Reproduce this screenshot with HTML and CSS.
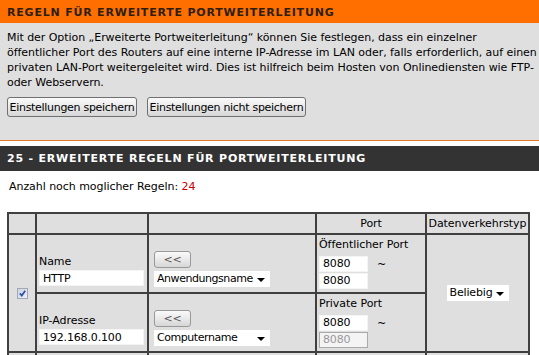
FILE: index.html
```html
<!DOCTYPE html>
<html lang="de">
<head>
    <meta charset="UTF-8">
    <title>Erweiterte Portweiterleitung</title>
    <link rel="stylesheet" href="styles.css">
</head>
<body>
    <div class="section intro">
        <h2 class="bar bar-orange">REGELN FÜR ERWEITERTE PORTWEITERLEITUNG</h2>
        <div class="intro-body">
            <p>Mit der Option „Erweiterte Portweiterleitung“ können Sie festlegen, dass ein einzelner<br>
            öffentlicher Port des Routers auf eine interne IP-Adresse im LAN oder, falls erforderlich, auf einen<br>
            privaten LAN-Port weitergeleitet wird. Dies ist hilfreich beim Hosten von Onlinediensten wie FTP-<br>
            oder Webservern.</p>
            <div class="actions">
                <button class="btn btn-save">Einstellungen speichern</button>
                <button class="btn btn-cancel">Einstellungen nicht speichern</button>
            </div>
        </div>
    </div>

    <div class="section rules">
        <h2 class="bar bar-dark">25 - ERWEITERTE REGELN FÜR PORTWEITERLEITUNG</h2>
        <p class="count">Anzahl noch moglicher Regeln: <span class="count-num">24</span></p>
        <table class="rules-table">
            <colgroup>
                <col class="c-check">
                <col class="c-name">
                <col class="c-pick">
                <col class="c-port">
                <col class="c-type">
            </colgroup>
            <tr class="head">
                <td></td>
                <td></td>
                <td></td>
                <td class="center">Port</td>
                <td class="center">Datenverkehrstyp</td>
            </tr>
            <tr class="rule">
                <td rowspan="2" class="center cell-check">
                    <span class="check">
                        <svg width="7" height="7" viewBox="0 0 7 7"><path d="M0.8 3.4 L2.8 5.6 L6.2 0.8" fill="none" stroke="#2a4fb0" stroke-width="1.7"/></svg>
                    </span>
                </td>
                <td class="cell-low">
                    <div class="label">Name</div>
                    <input type="text" class="field field-wide" value="HTTP">
                </td>
                <td class="cell-low">
                    <button class="btn btn-small">&lt;&lt;</button>
                    <span class="select select-wide">Anwendungsname</span>
                </td>
                <td class="port">
                    <div class="label">Öffentlicher Port</div>
                    <div class="port-line"><input type="text" class="field field-port" value="8080"><span class="tilde">~</span></div>
                    <input type="text" class="field field-port" value="8080">
                </td>
                <td rowspan="2" class="center">
                    <span class="select select-type">Beliebig</span>
                </td>
            </tr>
            <tr class="rule">
                <td class="cell-low">
                    <div class="label">IP-Adresse</div>
                    <input type="text" class="field field-wide" value="192.168.0.100">
                </td>
                <td class="cell-low">
                    <button class="btn btn-small">&lt;&lt;</button>
                    <span class="select select-wide">Computername</span>
                </td>
                <td class="port">
                    <div class="label">Private Port</div>
                    <div class="port-line"><input type="text" class="field field-port" value="8080"><span class="tilde">~</span></div>
                    <input type="text" class="field field-port" value="8080" disabled>
                </td>
            </tr>
            <tr class="rule">
                <td></td>
                <td></td>
                <td></td>
                <td></td>
                <td></td>
            </tr>
        </table>
    </div>
</body>
</html>
```

FILE: styles.css
```css
body {
    margin: 0;
    background: #fff;
    font-family: "DejaVu Sans", Tahoma, sans-serif;
    font-size: 11px;
    letter-spacing: -0.05px;
    color: #000;
    width: 539px;
    height: 355px;
    overflow: hidden;
}
.bar {
    margin: 0;
    font-family: "DejaVu Sans", Verdana, sans-serif;
    font-weight: bold;
    font-size: 11px;
    letter-spacing: 0.8px;
    padding: 0 7px;
}
.bar-orange {
    background: #ff6f00;
    color: #2e1e10;
    height: 23px;
    line-height: 25px;
}
.bar-dark {
    background: #333;
    color: #fff;
    height: 25px;
    line-height: 26px;
}
.intro {
    background: #dfdfdf;
    border-bottom: 1px solid #e07d2d;
}
.intro-body {
    padding: 7px 0 23px 7px;
}
.intro-body p {
    margin: 0;
    line-height: 15px;
    white-space: nowrap;
}
.actions {
    margin-top: 7px;
    display: flex;
    gap: 10px;
}
.btn {
    font-family: "DejaVu Sans", Tahoma, sans-serif;
    font-size: 11px;
    letter-spacing: -0.3px;
    white-space: nowrap;
    height: 20px;
    padding: 0;
    border: 1px solid #707070;
    border-radius: 3px;
    background: linear-gradient(#fafafa, #e6e6e6 60%, #d6d6d6);
    color: #000;
}
.btn-save {
    width: 130px;
}
.btn-cancel {
    width: 159px;
}
.rules {
    margin-top: 5px;
}
.count {
    margin: 0;
    padding: 8px 9px 0;
    height: 41px;
    box-sizing: border-box;
    line-height: 15px;
}
.count-num {
    color: #c00;
}
.rules-table {
    margin-left: 7px;
    width: 521px;
    table-layout: fixed;
    border-collapse: collapse;
    background: #dfdfdf;
}
.c-check { width: 28px; }
.c-name { width: 112px; }
.c-pick { width: 168px; }
.c-port { width: 110px; }
.c-type { width: 103px; }
.rules-table td {
    border: 2px solid #404040;
    padding: 0 2px;
    vertical-align: middle;
    box-sizing: border-box;
}
.rules-table .head td {
    height: 21px;
    line-height: 15px;
    padding: 0;
}
.rules-table .rule td {
    height: 59px;
}
.center {
    text-align: center;
}
.rules-table .cell-low {
    vertical-align: bottom;
    padding-bottom: 5px;
}
.label {
    line-height: 14px;
}
.port .label {
    margin-bottom: 4px;
}
.port-line {
    display: flex;
    align-items: center;
}
.tilde {
    margin-left: 9px;
}
.field {
    font-family: "DejaVu Sans", Tahoma, sans-serif;
    font-size: 11px;
    letter-spacing: -0.15px;
    height: 16px;
    box-sizing: border-box;
    border: 1px solid #f4f4f4;
    background: #fff;
    padding: 0 3px;
    display: block;
    margin-bottom: 1px;
}
.field-wide {
    width: 105px;
    margin-top: 1px;
}
.field-port {
    width: 49px;
}
.field:disabled {
    background: #f4f4f4;
    border-color: #aaa;
    color: #999;
}
.rules-table .cell-check {
    padding: 0;
}
.check {
    display: inline-block;
    width: 11px;
    height: 11px;
    box-sizing: border-box;
    border: 1px solid #a0a8b8;
    background: linear-gradient(135deg, #cdd3de, #eef0f4);
    vertical-align: middle;
    line-height: 0;
    padding: 1px;
}
.btn-small {
    height: 17px;
    width: 37px;
    padding: 0;
    margin-left: 3px;
    color: #555;
    border-color: #999;
    display: block;
}
.select {
    display: inline-block;
    position: relative;
    background: #fff;
    height: 16px;
    line-height: 16px;
    padding: 0 18px 0 3px;
    box-sizing: border-box;
    margin-top: 3px;
    margin-left: 3px;
    white-space: nowrap;
    vertical-align: top;
    letter-spacing: -0.15px;
}
.select::after {
    content: "";
    position: absolute;
    right: 5px;
    top: 7px;
    border-left: 4px solid transparent;
    border-right: 4px solid transparent;
    border-top: 4px solid #000;
}
.select-wide {
    width: 116px;
    letter-spacing: -0.45px;
}
.select-type {
    width: 62px;
    margin: 0;
    padding-right: 15px;
    text-align: left;
    vertical-align: middle;
}
```
